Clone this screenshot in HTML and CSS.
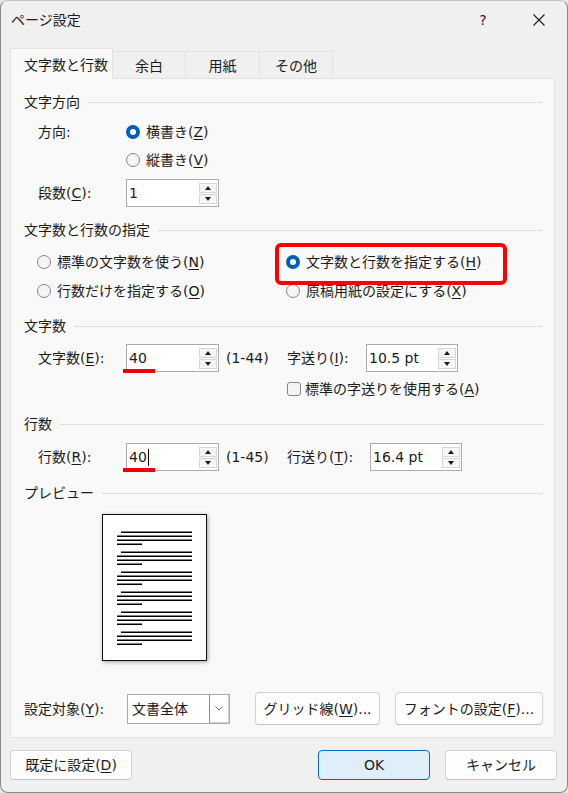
FILE: index.html
```html
<!DOCTYPE html>
<html lang="ja">
<head>
    <meta charset="utf-8">
    <title>ページ設定</title>
    <link rel="stylesheet" href="styles.css">
</head>
<body>
<div class="window">
    <div class="titlebar">
        <div class="title">ページ設定</div>
        <div class="help">?</div>
        <div class="close">
            <svg width="12" height="12" viewBox="0 0 12 12"><path d="M0.5 0.5L11.5 11.5M11.5 0.5L0.5 11.5" stroke="#1b1b1b" stroke-width="1.1"/></svg>
        </div>
    </div>

    <div class="tabs">
        <div class="tab active">文字数と行数</div>
        <div class="tab tab-margin">余白</div>
        <div class="tab tab-paper">用紙</div>
        <div class="tab tab-other">その他</div>
    </div>

    <div class="panel">
        <div class="group-head">文字方向</div>
        <div class="row dir-first">
            <span class="label">方向:</span>
            <span class="opt"><span class="radio checked"></span>横書き(<u>Z</u>)</span>
        </div>
        <div class="row">
            <span class="label"></span>
            <span class="opt"><span class="radio"></span>縦書き(<u>V</u>)</span>
        </div>
        <div class="row cols-row">
            <span class="label">段数(<u>C</u>):</span>
            <div class="spin">
                <span class="val">1</span>
                <span class="arrows"><span class="up"></span><span class="down"></span></span>
            </div>
        </div>

        <div class="group-head head-spec">文字数と行数の指定</div>
        <div class="row radio-row first-radio">
            <span class="opt left-col"><span class="radio"></span>標準の文字数を使う(<u>N</u>)</span>
            <span class="opt highlight"><span class="radio checked"></span>文字数と行数を指定する(<u>H</u>)</span>
        </div>
        <div class="row radio-row">
            <span class="opt left-col"><span class="radio"></span>行数だけを指定する(<u>O</u>)</span>
            <span class="opt"><span class="radio"></span>原稿用紙の設定にする(<u>X</u>)</span>
        </div>

        <div class="group-head head-chars">文字数</div>
        <div class="row chars-row">
            <div class="left-part">
                <span class="label">文字数(<u>E</u>):</span>
                <div class="spin marked">
                    <span class="val">40</span>
                    <span class="arrows"><span class="up"></span><span class="down"></span></span>
                </div>
                <span class="range">(1-44)</span>
            </div>
            <span class="label-pitch">字送り(<u>I</u>):</span>
            <div class="spin spin-pt">
                <span class="val">10.5 pt</span>
                <span class="arrows"><span class="up"></span><span class="down"></span></span>
            </div>
        </div>
        <div class="row check-row">
            <span class="opt"><span class="check"></span>標準の字送りを使用する(<u>A</u>)</span>
        </div>

        <div class="group-head head-lines">行数</div>
        <div class="row lines-row">
            <div class="left-part">
                <span class="label">行数(<u>R</u>):</span>
                <div class="spin marked">
                    <span class="val">40<span class="caret"></span></span>
                    <span class="arrows"><span class="up"></span><span class="down"></span></span>
                </div>
                <span class="range">(1-45)</span>
            </div>
            <span class="label-feed">行送り(<u>T</u>):</span>
            <div class="spin spin-pt">
                <span class="val">16.4 pt</span>
                <span class="arrows"><span class="up"></span><span class="down"></span></span>
            </div>
        </div>

        <div class="group-head head-preview">プレビュー</div>
        <div class="page">
            <svg width="103" height="145" viewBox="0 0 103 145">
                <g fill="#000">
                    <rect x="18" y="16.5" width="71" height="1.5"/><rect x="14" y="20.5" width="75" height="1.5"/><rect x="14" y="24.5" width="75" height="1.5"/><rect x="14" y="28.5" width="25" height="1.5"/>
                    <rect x="18" y="36.5" width="71" height="1.5"/><rect x="14" y="40.5" width="75" height="1.5"/><rect x="14" y="44.5" width="75" height="1.5"/><rect x="14" y="48.5" width="25" height="1.5"/>
                    <rect x="18" y="56.5" width="71" height="1.5"/><rect x="14" y="60.5" width="75" height="1.5"/><rect x="14" y="64.5" width="75" height="1.5"/><rect x="14" y="68.5" width="25" height="1.5"/>
                    <rect x="18" y="76.5" width="71" height="1.5"/><rect x="14" y="80.5" width="75" height="1.5"/><rect x="14" y="84.5" width="75" height="1.5"/><rect x="14" y="88.5" width="25" height="1.5"/>
                    <rect x="18" y="96.5" width="71" height="1.5"/><rect x="14" y="100.5" width="75" height="1.5"/><rect x="14" y="104.5" width="75" height="1.5"/><rect x="14" y="108.5" width="25" height="1.5"/>
                    <rect x="18" y="116.5" width="71" height="1.5"/><rect x="14" y="120.5" width="75" height="1.5"/><rect x="14" y="124.5" width="75" height="1.5"/><rect x="14" y="128.5" width="25" height="1.5"/>
                </g>
            </svg>
        </div>

        <div class="bottom-row">
            <span class="target-label">設定対象(<u>Y</u>):</span>
            <div class="select">
                <span class="select-text">文書全体</span>
                <span class="drop"><svg width="8" height="5" viewBox="0 0 8 5"><path d="M0.5 0.5L4 4L7.5 0.5" fill="none" stroke="#6b6b6b" stroke-width="1"/></svg></span>
            </div>
            <button class="btn btn-grid">グリッド線(<u>W</u>)...</button>
            <button class="btn btn-font">フォントの設定(<u>F</u>)...</button>
        </div>
    </div>

    <div class="footer">
        <button class="btn btn-default">既定に設定(<u>D</u>)</button>
        <button class="btn btn-ok">OK</button>
        <button class="btn btn-cancel">キャンセル</button>
    </div>
</div>
</body>
</html>
```

FILE: styles.css
```css
* {
    box-sizing: border-box;
}

html, body {
    margin: 0;
    padding: 0;
}

body {
    background: #e6e6e6;
    font-family: "DejaVu Sans", "Noto Sans CJK JP", sans-serif;
    font-size: 14px;
    line-height: 20px;
    color: #1b1b1b;
}

u {
    text-underline-offset: 2px;
    text-decoration-thickness: 1px;
}

.window {
    width: 568px;
    height: 793px;
    background: #f0f0f0;
    border: 1px solid #8a8a8a;
    border-top-color: #c4c4c4;
    border-radius: 8px;
    overflow: hidden;
    display: flex;
    flex-direction: column;
}

/* title bar */

.titlebar {
    height: 37px;
    flex: none;
    display: flex;
    align-items: center;
    padding-left: 10px;
}

.title {
    flex: 1;
}

.help {
    width: 10px;
    text-align: center;
    margin-right: 45px;
}

.close {
    width: 12px;
    height: 12px;
    margin-right: 22px;
    display: flex;
}

/* tabs */

.tabs {
    height: 41px;
    flex: none;
    display: flex;
    align-items: flex-end;
    padding-left: 9px;
}

.tab {
    height: 28px;
    padding-top: 4px;
    text-align: center;
    border: 1px solid #e2e2e2;
    border-bottom: none;
    margin-left: -1px;
    background: #f0f0f0;
}

.tab.active {
    position: relative;
    z-index: 1;
    margin-left: 0;
    width: 103px;
    height: 31px;
    padding: 6px 0 0 13px;
    text-align: left;
    background: #f9f9f9;
}

.tab-margin { width: 74px; }
.tab-paper { width: 75px; }
.tab-other { width: 74px; }

/* panel */

.panel {
    margin: -1px 12px 0 9px;
    height: 660px;
    flex: none;
    background: #f9f9f9;
    border: 1px solid #e2e2e2;
    padding: 13px 11px 0 13px;
}

.group-head {
    display: flex;
    align-items: center;
    gap: 8px;
    height: 20px;
}

.group-head::after {
    content: "";
    flex: 1;
    border-top: 1px solid #dedede;
}

.head-spec { margin-top: 13px; }
.head-chars { margin-top: 11px; }
.head-lines { margin-top: 11px; }
.head-preview { margin-top: 12px; }

.row {
    display: flex;
    align-items: center;
    height: 28px;
    padding-left: 14px;
}

.dir-first { margin-top: 6px; }
.cols-row { margin-top: 5px; }

.radio-row {
    height: 29px;
    padding-left: 13px;
}

.first-radio { margin-top: 7px; }
.chars-row { margin-top: 8px; }
.check-row { margin-top: 3px; padding-left: 263px; }
.lines-row { margin-top: 9px; }

.label {
    width: 88px;
    flex: none;
}

.label-pitch {
    width: 79px;
    flex: none;
}

.label-feed {
    width: 83px;
    flex: none;
}

.left-part {
    width: 249px;
    flex: none;
    display: flex;
    align-items: center;
}

.range {
    margin-left: 7px;
}

.opt {
    display: flex;
    align-items: center;
    white-space: nowrap;
}

.left-col {
    width: 249px;
}

.radio {
    width: 14px;
    height: 14px;
    flex: none;
    border-radius: 50%;
    border: 1px solid #858585;
    background: #f5f5f5;
    margin-right: 6px;
}

.radio.checked {
    border: 4px solid #005fb8;
    background: #fff;
}

.highlight {
    position: relative;
}

.highlight::after {
    content: "";
    position: absolute;
    left: -11px;
    top: -9px;
    width: 224px;
    height: 34px;
    border: 4px solid #ff0000;
    border-radius: 6px;
}

.check {
    width: 14px;
    height: 14px;
    flex: none;
    border: 1px solid #858585;
    border-radius: 3px;
    background: #f5f5f5;
    margin-right: 4px;
}

/* spin boxes */

.spin {
    position: relative;
    width: 93px;
    height: 28px;
    flex: none;
    border: 1px solid #ababab;
    background: #fff;
    display: flex;
    align-items: center;
    padding-left: 2px;
}

.spin-pt {
    width: 92px;
}

.spin .val {
    flex: 1;
    display: flex;
    align-items: center;
}

.caret {
    width: 1px;
    height: 17px;
    margin-left: 1px;
    background: #000;
}

.marked::after {
    content: "";
    position: absolute;
    left: -4px;
    bottom: -2px;
    width: 32px;
    height: 4px;
    background: #f00000;
}

.arrows {
    display: flex;
    flex-direction: column;
    gap: 1px;
    margin-right: 1px;
}

.arrows span {
    width: 18px;
    height: 10px;
    border: 1px solid #d6d6d6;
    background: #f7f7f7;
    display: flex;
    align-items: center;
    justify-content: center;
}

.arrows .up::before {
    content: "";
    border-left: 3.5px solid transparent;
    border-right: 3.5px solid transparent;
    border-bottom: 4px solid #1b1b1b;
}

.arrows .down::before {
    content: "";
    border-left: 3.5px solid transparent;
    border-right: 3.5px solid transparent;
    border-top: 4px solid #1b1b1b;
}

/* preview */

.page {
    width: 105px;
    height: 147px;
    margin: 11px 0 0 78px;
    background: #fff;
    border: 1px solid #111;
    box-shadow: 1px 1px 4px rgba(0, 0, 0, .35);
}

.page svg {
    display: block;
}

/* bottom controls */

.bottom-row {
    display: flex;
    align-items: center;
    height: 33px;
    margin-top: 31px;
}

.target-label {
    width: 103px;
    flex: none;
}

.select {
    width: 103px;
    height: 30px;
    border: 1px solid #ababab;
    background: #fff;
    display: flex;
}

.select-text {
    flex: 1;
    padding-left: 4px;
    line-height: 28px;
}

.drop {
    width: 20px;
    border-left: 1px solid #8a8a8a;
    border-right: 1px solid #d2d2d2;
    border-bottom: 1px solid #d2d2d2;
    display: flex;
    align-items: center;
    justify-content: center;
}

.btn {
    font-family: "DejaVu Sans", "Noto Sans CJK JP", sans-serif;
    font-size: 14px;
    line-height: 20px;
    color: #1b1b1b;
    height: 33px;
    padding: 0;
    border: 1px solid #d3d3d3;
    border-bottom-color: #c2c2c2;
    border-radius: 4px;
    background: #fdfdfd;
}

.btn-grid {
    width: 125px;
    margin-left: 25px;
}

.btn-font {
    width: 148px;
    margin-left: 15px;
}

/* footer */

.footer {
    display: flex;
    margin-top: 12px;
    padding: 0 10px 0 9px;
}

.footer .btn {
    height: 30px;
}

.btn-default {
    width: 122px;
}

.btn-ok {
    width: 112px;
    margin-left: auto;
    background: #e0eef9;
    border-color: #0067c0;
}

.btn-cancel {
    width: 112px;
    margin-left: 15px;
}
```
